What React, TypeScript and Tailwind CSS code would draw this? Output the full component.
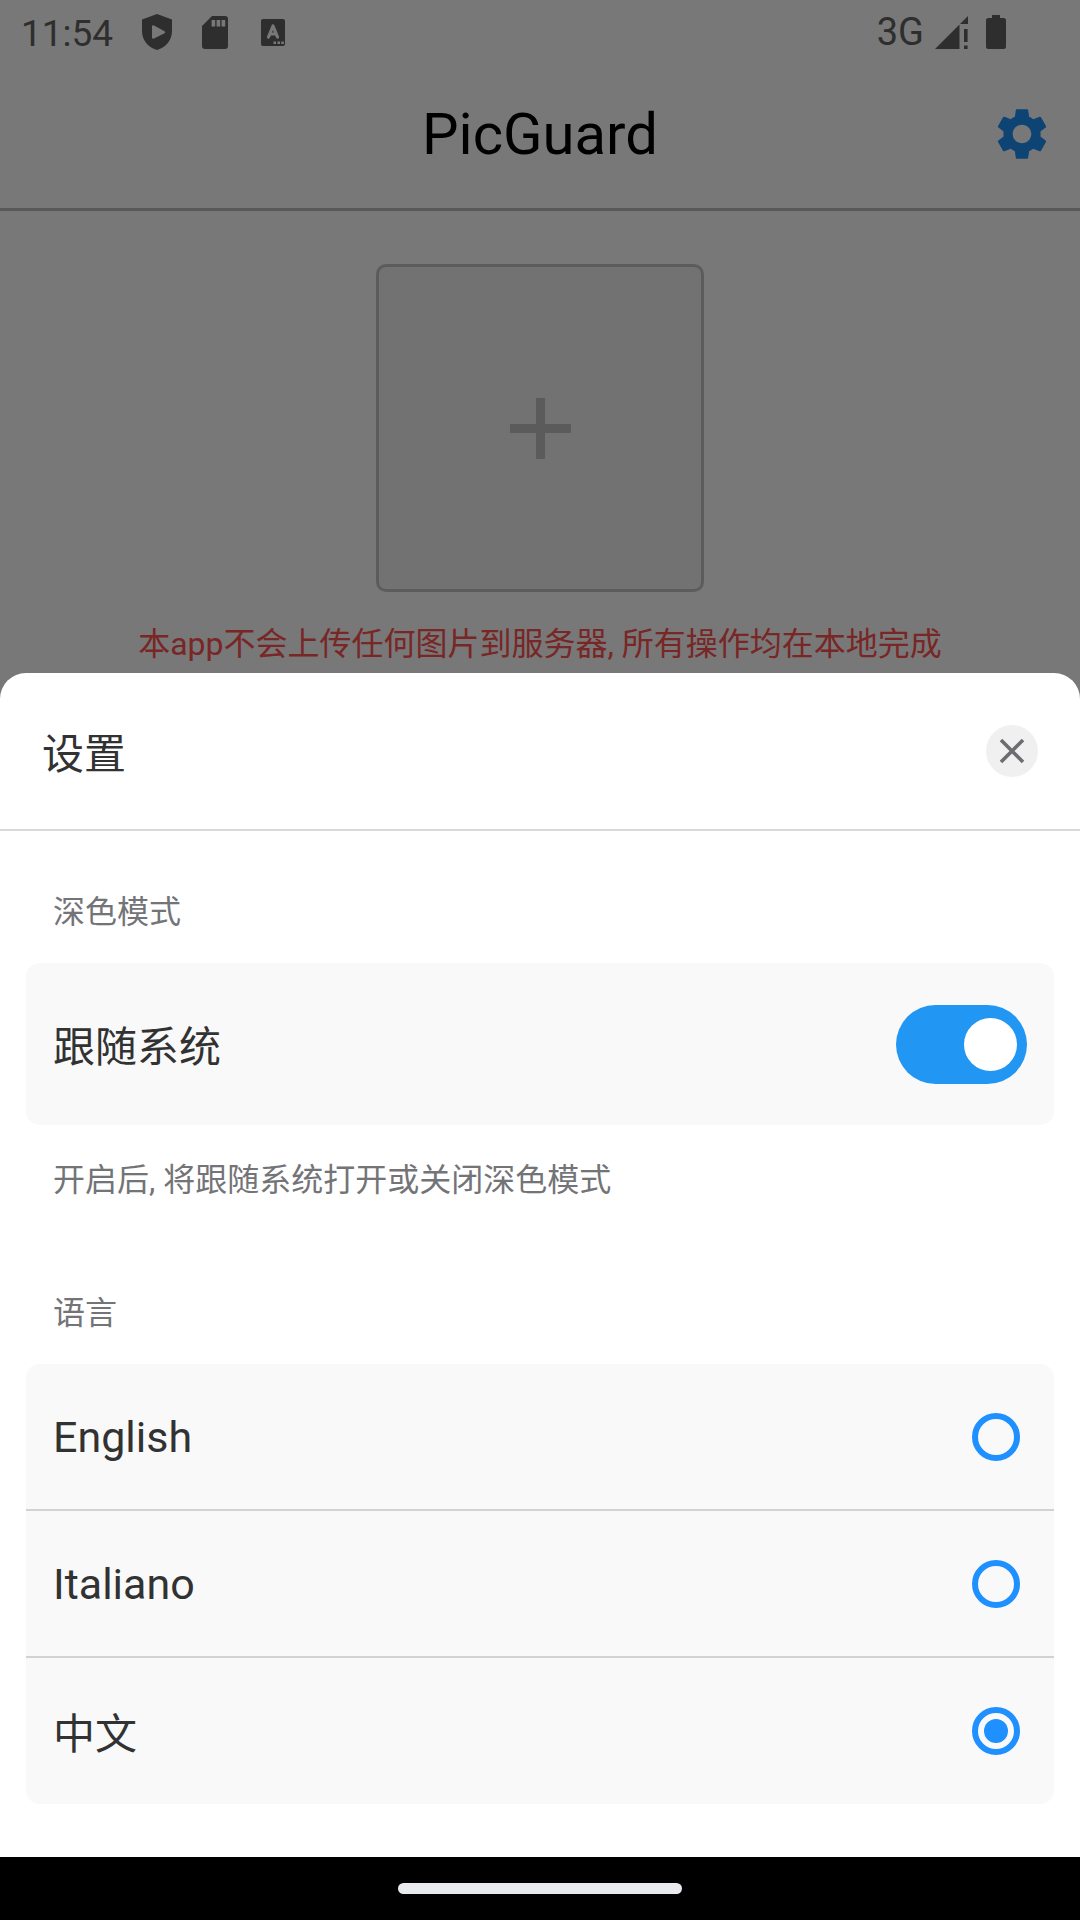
import { useState } from "react";
import { MdSettings } from "react-icons/md";

const LANGUAGES = [
  { id: "en", label: "English", font: "font-['Roboto',sans-serif] text-[43px]" },
  { id: "it", label: "Italiano", font: "font-['Roboto',sans-serif] text-[43px]" },
  { id: "zh", label: "中文", font: "font-['Noto_Sans_CJK_SC',sans-serif] text-[42px]" },
];

function StatusBar() {
  return (
    <div className="flex h-[64px] items-center pl-[21px] pr-[74px] text-[#636363]">
      <span className="w-[121px] pt-[3px] text-[37px] leading-[48px]">11:54</span>
      <svg className="h-[36px] w-[30px]" viewBox="0 0 30 36" fill="currentColor">
        <path
          fillRule="evenodd"
          d="M15 0 30 5.500V17c0 9-6 16.500-15 19C6 33.500 0 26 0 17V5.500ZM10 13v10.500a1.300 1.300 0 0 0 2 1l10.500-5.300a1.200 1.200 0 0 0 0-2L12 11.600a1.300 1.300 0 0 0-2 1.400Z"
        />
      </svg>
      <svg className="ml-[30px] h-[33px] w-[26px]" viewBox="0 0 26 33" fill="currentColor">
        <path
          fillRule="evenodd"
          d="M10 0H23a3 3 0 0 1 3 3v27a3 3 0 0 1-3 3H3a3 3 0 0 1-3-3V10ZM9.600 4v6.500h3.600V4Zm5 0v6.500h3.600V4Zm5 0v6.500h3.600V4Z"
        />
      </svg>
      <svg className="ml-[33px] h-[27px] w-[24px]" viewBox="0 0 24 27">
        <rect width="24" height="27" rx="2" fill="currentColor" />
        <path
          d="M7.500 18 12 7 16.500 18M9 15h6"
          fill="none"
          stroke="#fff"
          strokeWidth="3.200"
          strokeLinecap="round"
          strokeLinejoin="round"
        />
        <path d="M12.500 22.500h2.500v2.500h-2.500zM16.500 22.500h2.500v2.500h-2.500zM20.300 22.500h2.500v2.500h-2.500z" fill="#fff" />
      </svg>
      <span className="ml-auto text-[38px] leading-[48px]">3G</span>
      <svg className="ml-[11px] h-[33px] w-[33px]" viewBox="0 0 33 33" fill="currentColor">
        <path d="M0 33 24.500 8.500V33ZM25 8 33 0V8ZM29 13h3.600v13H29zM29 29.500h3.600V33H29z" />
      </svg>
      <svg className="ml-[18px] h-[34px] w-[20px]" viewBox="0 0 20 34" fill="currentColor">
        <path d="M6 0h8v3h3.500A2.500 2.500 0 0 1 20 5.500v26a2.500 2.500 0 0 1-2.500 2.500h-15A2.500 2.500 0 0 1 0 31.500v-26A2.500 2.500 0 0 1 2.500 3H6Z" />
      </svg>
    </div>
  );
}

function HomePage() {
  return (
    <div className="col-start-1 row-start-1 bg-white">
      <StatusBar />
      <header className="grid h-[147px] grid-cols-[1fr_auto_1fr] items-center border-b-[3px] border-[#bcbcbc] pb-[4px]">
        <h1 className="col-start-2 text-[58px] leading-[72px] text-black">PicGuard</h1>
        <button aria-label="设置" className="mr-[27px] justify-self-end text-[#1e90f5]">
          <MdSettings className="size-[62px]" />
        </button>
      </header>
      <main className="flex flex-col items-center pt-[53px]">
        <button
          aria-label="添加图片"
          className="grid size-[328px] place-items-center rounded-[10px] border-[3px] border-[#c4c4c4] bg-[#f3f3f3]"
        >
          <svg className="size-[61px]" viewBox="0 0 61 61" fill="#c2c2c2">
            <path d="M26 0h9v26h26v9H35v26h-9V35H0v-9h26z" />
          </svg>
        </button>
        <p className="mt-[28px] text-[32px] leading-[48px] text-[#ff5252]">
          本app不会上传任何图片到服务器, 所有操作均在本地完成
        </p>
      </main>
    </div>
  );
}

function SettingsSheet() {
  const [followSystem, setFollowSystem] = useState(true);
  const [language, setLanguage] = useState("zh");

  return (
    <section role="dialog" aria-label="设置" className="rounded-t-[26px] bg-white text-[#323233]">
      <div className="flex h-[158px] items-center justify-between border-b-2 border-[#d8d8d8] px-[42px]">
        <h2 className="font-['Noto_Sans_CJK_SC',sans-serif] text-[42px] leading-[56px]">设置</h2>
        <button aria-label="关闭" className="grid size-[52px] place-items-center rounded-full bg-[#f0f0f0]">
          <svg className="size-[26px]" viewBox="0 0 26 26" fill="none" stroke="#6c6d70" strokeWidth="3.600">
            <path d="M2 2 24 24M24 2 2 24" />
          </svg>
        </button>
      </div>

      <div className="px-[26px] pb-[53px] pt-[57px]">
        <h3 className="px-[27px] text-[32px] leading-[48px] text-[#737477]">深色模式</h3>
        <label className="mt-[27px] flex h-[162px] items-center justify-between rounded-[14px] bg-[#f9f9f9] px-[27px]">
          <span className="font-['Noto_Sans_CJK_SC',sans-serif] text-[42px] leading-[56px]">跟随系统</span>
          <input
            type="checkbox"
            role="switch"
            checked={followSystem}
            onChange={(e) => setFollowSystem(e.target.checked)}
            className="flex h-[79px] w-[131px] appearance-none items-center rounded-full bg-[#c8c9cc] px-[10px] before:size-[53px] before:rounded-full before:bg-white checked:justify-end checked:bg-[#2196f3]"
          />
        </label>
        <p className="mt-[31px] px-[27px] text-[32px] leading-[48px] text-[#737477]">
          开启后, 将跟随系统打开或关闭深色模式
        </p>

        <h3 className="mt-[85px] px-[27px] text-[32px] leading-[48px] text-[#737477]">语言</h3>
        <div
          role="radiogroup"
          aria-label="语言"
          className="mt-[27px] divide-y-2 divide-[#d2d2d2] rounded-[14px] bg-[#f9f9f9]"
        >
          {LANGUAGES.map(({ id, label, font }) => (
            <label
              key={id}
              className="flex h-[147px] items-center justify-between pl-[27px] pr-[34px] last:h-[146px]"
            >
              <span className={`leading-[56px] ${font}`}>{label}</span>
              <input
                type="radio"
                name="language"
                value={id}
                checked={language === id}
                onChange={() => setLanguage(id)}
                className="grid size-[48px] appearance-none place-items-center rounded-full border-[6px] border-[#1e90ff] before:size-[24px] before:rounded-full checked:before:bg-[#1e90ff]"
              />
            </label>
          ))}
        </div>
      </div>
    </section>
  );
}

export default function App() {
  return (
    <div lang="zh-CN" className="grid min-h-screen font-['Roboto','Noto_Sans_CJK_SC',sans-serif]">
      <HomePage />
      <div className="z-10 col-start-1 row-start-1 flex flex-col justify-end bg-black/53">
        <SettingsSheet />
        <div className="flex h-[63px] items-center justify-center bg-black">
          <div className="h-[11px] w-[284px] rounded-full bg-[#e8eaed]" />
        </div>
      </div>
    </div>
  );
}
